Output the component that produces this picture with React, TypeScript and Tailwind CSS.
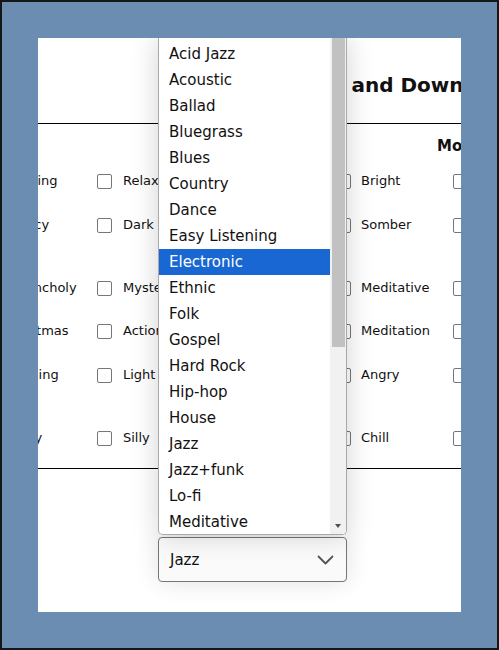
const genres = [
  "Acid Jazz",
  "Acoustic",
  "Ballad",
  "Bluegrass",
  "Blues",
  "Country",
  "Dance",
  "Easy Listening",
  "Electronic",
  "Ethnic",
  "Folk",
  "Gospel",
  "Hard Rock",
  "Hip-hop",
  "House",
  "Jazz",
  "Jazz+funk",
  "Lo-fi",
  "Meditative",
];

const rows = [
  { h: "h-[44px]", moods: ["Uplifting", "Relaxing", "Bright", "Motivating"] },
  { h: "h-[63px]", moods: ["Legacy", "Dark", "Somber", "Moody"] },
  { h: "h-[43px]", moods: ["Melancholy", "Mysterious", "Meditative", "Morose"] },
  { h: "h-[44px]", moods: ["Christmas", "Action", "Meditation", "Mellow"] },
  { h: "h-[63px]", moods: ["Yearning", "Light", "Angry", "Mad"] },
  { h: "h-[52px]", moods: ["Funny", "Silly", "Chill", "Mild"] },
];

function Box() {
  return <div className="w-[15px] h-[15px] border border-[#767676] rounded-[2px] bg-white shrink-0" />;
}

function MoodRow({ h, moods }: { h: string; moods: string[] }) {
  return (
    <div className={`${h} flex items-start pt-[14px] text-[13px] leading-4 text-[#111]`}>
      <div className="w-[26px] pt-[0.5px]"><Box /></div>
      <div className="w-[94px] whitespace-nowrap">{moods[0]}</div>
      <div className="w-[26px] pt-[0.5px]"><Box /></div>
      <div className="w-[213px] whitespace-nowrap">{moods[1]}</div>
      <div className="w-[25px] pt-[0.5px]"><Box /></div>
      <div className="w-[92px] whitespace-nowrap">{moods[2]}</div>
      <div className="w-[26px] pt-[0.5px]"><Box /></div>
      <div className="w-[100px] whitespace-nowrap">{moods[3]}</div>
    </div>
  );
}

export default function App() {
  return (
    <div
      className="w-[499px] h-[650px] border-2 border-[#161616] bg-[#6b8db2] p-[36px] overflow-hidden"
      style={{ fontFamily: '"DejaVu Sans", Verdana, sans-serif' }}
    >
      <div className="relative w-[423px] h-[574px] bg-white overflow-hidden">
        {/* heading */}
        <div className="h-[86px] border-b border-black pt-[35px] pl-[264px]">
          <h1 className="text-[20px] leading-6 font-bold text-[#111] whitespace-nowrap">Ups and Downs</h1>
        </div>

        {/* mood table */}
        <div className="ml-[-61px] w-[700px]">
          <div className="h-[35px] pt-[10px] pl-[460px]">
            <span className="text-[15px] leading-4 font-bold text-[#111] whitespace-nowrap">Mood</span>
          </div>
          {rows.map((r) => (
            <MoodRow key={r.moods[0]} h={r.h} moods={r.moods} />
          ))}
        </div>
        <div className="border-t border-black" />

        {/* select */}
        <div className="mt-[68px] ml-[120px] w-[189px] h-[45px] rounded-[4px] border border-[#767676] bg-[#fafafa] shadow-[0_0_24px_rgba(0,0,0,0.12)] flex items-center justify-between pl-[11px] pr-[12px]">
          <span className="text-[15px] text-[#111] pt-[2px]">Jazz</span>
          <svg width="17" height="10" viewBox="0 0 17 10" fill="none" stroke="#555" strokeWidth="1.8" strokeLinecap="round" strokeLinejoin="round">
            <polyline points="1.5,1.5 8.5,8.5 15.5,1.5" />
          </svg>
        </div>

        {/* open listbox */}
        <div className="absolute left-[120px] top-0 w-[189px] h-[497px] z-10 bg-white border border-[#a9a9a9] border-t-0 rounded-b-[5px] shadow-[0_0_28px_rgba(0,0,0,0.18)] flex overflow-hidden">
          <ul className="flex-1 pt-[3px]">
            {genres.map((g) => (
              <li
                key={g}
                className={`h-[26px] leading-[26px] pl-[10px] text-[15px] whitespace-nowrap ${
                  g === "Electronic" ? "bg-[#1967d2] text-white" : "text-[#111]"
                }`}
              >
                {g}
              </li>
            ))}
          </ul>
          <div className="w-[16px] bg-[#f1f1f1] flex flex-col items-center">
            <div className="w-[13px] h-[309px] bg-[#c1c1c1]" />
            <div className="flex-1" />
            <div className="w-0 h-0 border-l-[3px] border-r-[3px] border-t-[4px] border-l-transparent border-r-transparent border-t-[#505050] mb-[6px]" />
          </div>
        </div>
      </div>
    </div>
  );
}
